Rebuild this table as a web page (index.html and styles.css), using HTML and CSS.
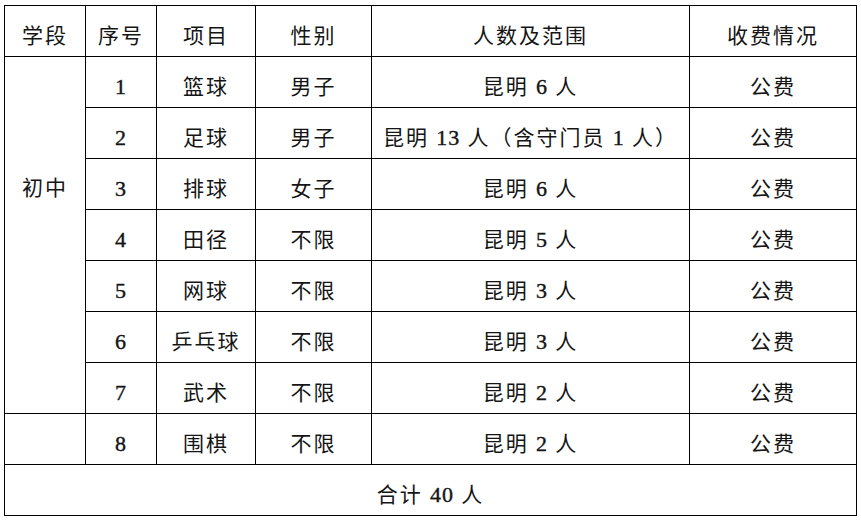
FILE: index.html
```html
<!DOCTYPE html>
<html lang="zh">
<head>
<meta charset="utf-8">
<link rel="stylesheet" href="styles.css">
</head>
<body>
<table class="sheet">
  <colgroup>
    <col class="c-stage">
    <col class="c-no">
    <col class="c-item">
    <col class="c-sex">
    <col class="c-range">
    <col class="c-fee">
  </colgroup>
  <thead>
    <tr>
      <th>学段</th><th>序号</th><th>项目</th><th>性别</th><th>人数及范围</th><th>收费情况</th>
    </tr>
  </thead>
  <tbody>
    <tr><td rowspan="7" class="stage">初中</td><td><span class="num">1</span></td><td>篮球</td><td>男子</td><td>昆明 <span class="num">6</span> 人</td><td>公费</td></tr>
    <tr><td><span class="num">2</span></td><td>足球</td><td>男子</td><td>昆明 <span class="num">13</span> 人（含守门员 <span class="num">1</span> 人）</td><td>公费</td></tr>
    <tr><td><span class="num">3</span></td><td>排球</td><td>女子</td><td>昆明 <span class="num">6</span> 人</td><td>公费</td></tr>
    <tr><td><span class="num">4</span></td><td>田径</td><td>不限</td><td>昆明 <span class="num">5</span> 人</td><td>公费</td></tr>
    <tr><td><span class="num">5</span></td><td>网球</td><td>不限</td><td>昆明 <span class="num">3</span> 人</td><td>公费</td></tr>
    <tr><td><span class="num">6</span></td><td>乒乓球</td><td>不限</td><td>昆明 <span class="num">3</span> 人</td><td>公费</td></tr>
    <tr><td><span class="num">7</span></td><td>武术</td><td>不限</td><td>昆明 <span class="num">2</span> 人</td><td>公费</td></tr>
    <tr><td></td><td><span class="num">8</span></td><td>围棋</td><td>不限</td><td>昆明 <span class="num">2</span> 人</td><td>公费</td></tr>
    <tr><td colspan="6">合计 <span class="num">40</span> 人</td></tr>
  </tbody>
</table>
</body>
</html>
```
FILE: styles.css
```css
html, body {
  margin: 0;
  padding: 0;
  background: #fff;
}
body {
  padding: 5px 0 0 4px;
}
.sheet {
  border-collapse: collapse;
  table-layout: fixed;
  width: 853px;
  font-family: "Liberation Serif", "Noto Sans CJK SC", serif;
  font-size: 21px;
  letter-spacing: 2px;
  color: #151515;
}
.c-stage { width: 81px; }
.c-no { width: 71px; }
.c-item { width: 99px; }
.c-sex { width: 116px; }
.c-range { width: 318px; }
.c-fee { width: 167px; }
.sheet tr { height: 51px; }
.sheet th,
.sheet td {
  border: 1px solid #000;
  padding: 10px 0 0 0;
  text-align: center;
  vertical-align: middle;
  font-weight: normal;
  line-height: 24px;
  white-space: nowrap;
}
.sheet td.stage {
  vertical-align: top;
  padding-top: 119px;
}
.num {
  font-size: 22px;
  letter-spacing: 1px;
  -webkit-text-stroke: 0.4px #151515;
}
```
